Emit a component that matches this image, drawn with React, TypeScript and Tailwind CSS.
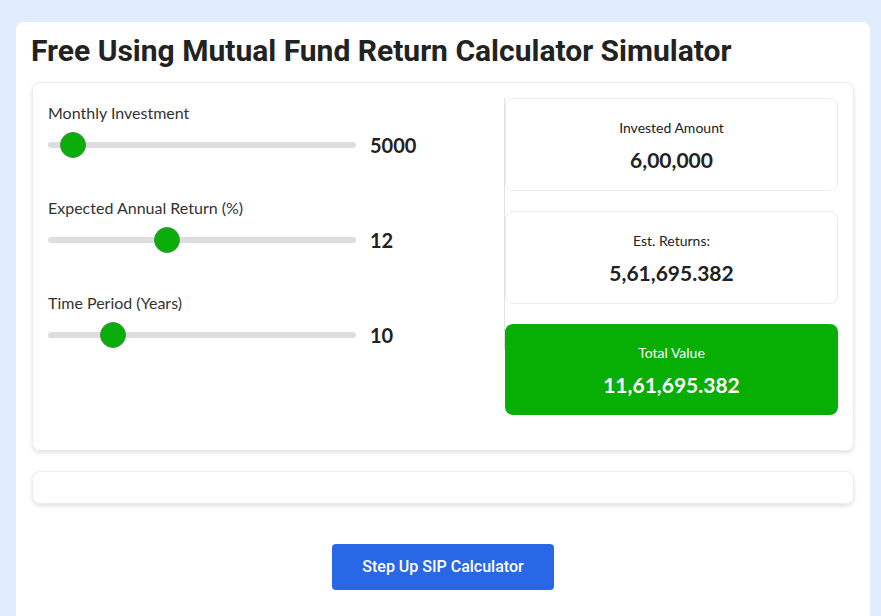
import React from "react";

interface SliderRowProps {
  label: string;
  value: string;
  percent: number;
}

// fake range slider, thumb placed by value
function SliderRow({ label, value, percent }: SliderRowProps) {
  return (
    <div className="mb-[38px]">
      <div className="h-6 text-[16px] leading-6 text-[#333]">{label}</div>
      <div className="mt-[7px] flex h-[26px] items-center">
        <div className="relative h-[6px] w-[308px] rounded-full bg-[#dddddd]">
          <div
            className="absolute top-1/2 h-[26px] w-[26px] -translate-x-1/2 -translate-y-1/2 rounded-full border border-[#3f8f3f] bg-[#0aad0a]"
            style={{ left: `${percent}%` }}
          />
        </div>
        <div className="ml-[14px] text-[20px] font-bold leading-none text-[#222]">
          {value}
        </div>
      </div>
    </div>
  );
}

interface ResultCardProps {
  title: string;
  amount: string;
  highlight?: boolean;
}

function ResultCard({ title, amount, highlight = false }: ResultCardProps) {
  return (
    <div
      className={
        highlight
          ? "flex h-[91px] flex-col items-center justify-center rounded-lg bg-[#07ae04] text-white"
          : "flex h-[93px] flex-col items-center justify-center rounded-lg border border-[#ececec] bg-white text-[#222]"
      }
    >
      <div className="text-[14px] leading-5">{title}</div>
      <div className="mt-[10px] text-[21px] font-bold leading-6">{amount}</div>
    </div>
  );
}

export default function App() {
  return (
    <div
      className="min-h-[616px] bg-[#e1edfd] px-4 pt-[22px]"
      style={{ fontFamily: "Lato, 'Noto Sans', sans-serif" }}
    >
      <div className="h-[600px] w-[854px] rounded-t-lg bg-white px-4 pt-3">
        <h1
          className="ml-[-1px] text-[30px] font-bold leading-[34px] text-[#222]"
          style={{ fontFamily: "Roboto, 'Liberation Sans', sans-serif" }}
        >
          Free Using Mutual Fund Return Calculator Simulator
        </h1>

        {/* calculator */}
        <div className="mt-[14px] flex rounded-lg border border-[#ececf2] px-[15px] pb-[35px] pt-[15px] shadow-[0_2px_4px_rgba(0,0,0,0.12)]">
          <div className="h-[252px] w-[457px] border-r border-[#e2e2e2] pt-[3px]">
            <SliderRow label="Monthly Investment" value="5000" percent={8} />
            <SliderRow label="Expected Annual Return (%)" value="12" percent={38.5} />
            <SliderRow label="Time Period (Years)" value="10" percent={21} />
          </div>
          <div className="flex w-[333px] flex-col gap-[20px]">
            <ResultCard title="Invested Amount" amount="6,00,000" />
            <ResultCard title="Est. Returns:" amount="5,61,695.382" />
            <ResultCard title="Total Value" amount="11,61,695.382" highlight />
          </div>
        </div>

        <div className="mt-[20px] h-[33px] rounded-lg border border-[#ececf2] shadow-[0_2px_4px_rgba(0,0,0,0.12)]" />

        <div className="mt-[40px] flex justify-center">
          <button
            className="h-[46px] w-[222px] rounded bg-[#2868e6] text-[16px] font-medium text-white"
            style={{ fontFamily: "Roboto, 'Liberation Sans', sans-serif" }}
          >
            Step Up SIP Calculator
          </button>
        </div>
      </div>
    </div>
  );
}
